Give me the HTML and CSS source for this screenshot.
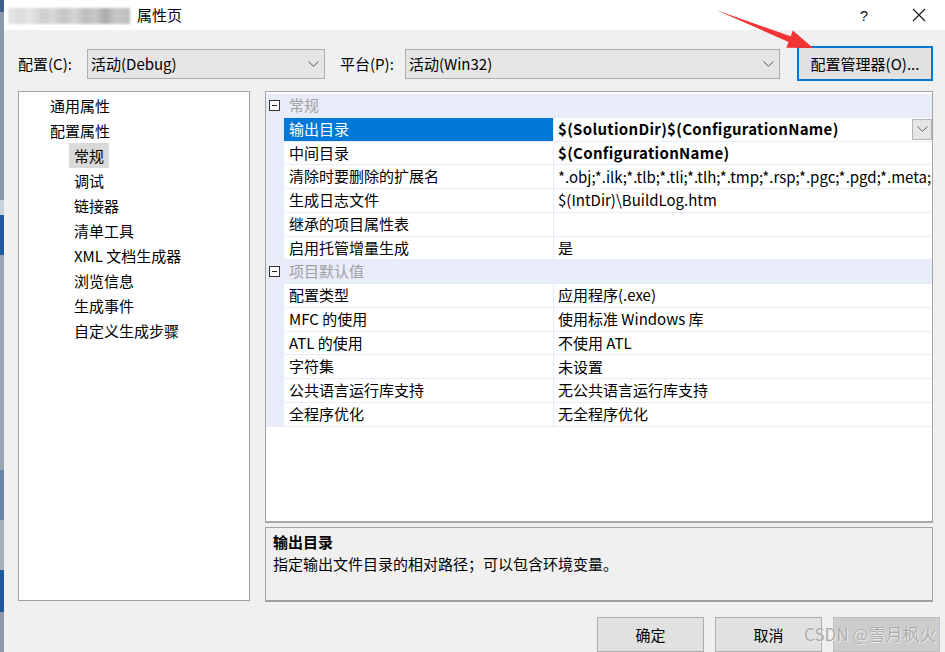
FILE: index.html
```html
<!DOCTYPE html>
<html lang="zh-CN">
<head>
<meta charset="utf-8">
<title>属性页</title>
<link rel="stylesheet" href="styles.css">
</head>
<body>
<div class="screen">
  <div class="bgstrip"></div>
  <div class="dialog">
    <div class="titlebar">
      <div class="blurname"></div>
      <span class="title">属性页</span>
      <span class="tb-help">?</span>
      <span class="tb-close"><svg width="14" height="14" viewBox="0 0 14 14"><path d="M1 1 L13 13 M13 1 L1 13" stroke="#111" stroke-width="1.1" fill="none"/></svg></span>
    </div>

    <div class="toolbar">
      <span class="lbl lbl-config">配置(C):</span>
      <div class="select sel-config"><span class="sel-text">活动(Debug)</span><svg class="chev" width="11" height="6" viewBox="0 0 11 6"><path d="M0.5 0.5 L5.5 5.3 L10.5 0.5" stroke="#555" stroke-width="1" fill="none"/></svg></div>
      <span class="lbl lbl-platform">平台(P):</span>
      <div class="select sel-platform"><span class="sel-text">活动(Win32)</span><svg class="chev" width="11" height="6" viewBox="0 0 11 6"><path d="M0.5 0.5 L5.5 5.3 L10.5 0.5" stroke="#555" stroke-width="1" fill="none"/></svg></div>
      <button class="btn btn-manager">配置管理器(O)...</button>
    </div>

    <div class="main">
      <div class="tree">
        <div class="node l1"><span>通用属性</span></div>
        <div class="node l1"><span>配置属性</span></div>
        <div class="node l2"><span class="sel">常规</span></div>
        <div class="node l2"><span>调试</span></div>
        <div class="node l2"><span>链接器</span></div>
        <div class="node l2"><span>清单工具</span></div>
        <div class="node l2"><span>XML 文档生成器</span></div>
        <div class="node l2"><span>浏览信息</span></div>
        <div class="node l2"><span>生成事件</span></div>
        <div class="node l2"><span>自定义生成步骤</span></div>
      </div>

      <div class="right">
        <div class="grid">
          <div class="row cat">
            <div class="gutter"><span class="minus"></span></div>
            <div class="cat-label">常规</div>
          </div>
          <div class="row">
            <div class="gutter"></div>
            <div class="name selected">输出目录</div>
            <div class="value bold"><span class="vtext">$(SolutionDir)$(ConfigurationName)</span><span class="dd"><svg width="11" height="6" viewBox="0 0 11 6"><path d="M0.5 0.5 L5.5 5.3 L10.5 0.5" stroke="#666" stroke-width="1" fill="none"/></svg></span></div>
          </div>
          <div class="row">
            <div class="gutter"></div>
            <div class="name">中间目录</div>
            <div class="value bold"><span class="vtext">$(ConfigurationName)</span></div>
          </div>
          <div class="row">
            <div class="gutter"></div>
            <div class="name">清除时要删除的扩展名</div>
            <div class="value"><span class="vtext">*.obj;*.ilk;*.tlb;*.tli;*.tlh;*.tmp;*.rsp;*.pgc;*.pgd;*.meta;$(TargetPath);$(ExtensionsToDeleteOnClean)</span></div>
          </div>
          <div class="row">
            <div class="gutter"></div>
            <div class="name">生成日志文件</div>
            <div class="value"><span class="vtext">$(IntDir)\BuildLog.htm</span></div>
          </div>
          <div class="row">
            <div class="gutter"></div>
            <div class="name">继承的项目属性表</div>
            <div class="value"><span class="vtext"></span></div>
          </div>
          <div class="row">
            <div class="gutter"></div>
            <div class="name">启用托管增量生成</div>
            <div class="value"><span class="vtext">是</span></div>
          </div>
          <div class="row cat">
            <div class="gutter"><span class="minus"></span></div>
            <div class="cat-label">项目默认值</div>
          </div>
          <div class="row">
            <div class="gutter"></div>
            <div class="name">配置类型</div>
            <div class="value"><span class="vtext">应用程序(.exe)</span></div>
          </div>
          <div class="row">
            <div class="gutter"></div>
            <div class="name">MFC 的使用</div>
            <div class="value"><span class="vtext">使用标准 Windows 库</span></div>
          </div>
          <div class="row">
            <div class="gutter"></div>
            <div class="name">ATL 的使用</div>
            <div class="value"><span class="vtext">不使用 ATL</span></div>
          </div>
          <div class="row">
            <div class="gutter"></div>
            <div class="name">字符集</div>
            <div class="value"><span class="vtext">未设置</span></div>
          </div>
          <div class="row">
            <div class="gutter"></div>
            <div class="name">公共语言运行库支持</div>
            <div class="value"><span class="vtext">无公共语言运行库支持</span></div>
          </div>
          <div class="row">
            <div class="gutter"></div>
            <div class="name">全程序优化</div>
            <div class="value"><span class="vtext">无全程序优化</span></div>
          </div>
        </div>
        <div class="desc">
          <div class="desc-title">输出目录</div>
          <div class="desc-text">指定输出文件目录的相对路径；可以包含环境变量。</div>
        </div>
      </div>
    </div>

    <div class="footer">
      <button class="btn btn-foot">确定</button>
      <button class="btn btn-foot">取消</button>
      <button class="btn btn-foot disabled" aria-label="应用"></button>
    </div>
  </div>

  <svg class="arrow" width="945" height="652" viewBox="0 0 945 652">
    <polygon points="716,10 790.7,36.3 792.9,30.5 813,48 786.3,47.7 788.5,41.9" fill="#f23434"/>
  </svg>
  <div class="watermark">CSDN @雪月枫火</div>
</div>
</body>
</html>
```

FILE: styles.css
```css
* { box-sizing: border-box; }

html, body {
  margin: 0;
  padding: 0;
  width: 945px;
  height: 652px;
  overflow: hidden;
  background: #f0f0f0;
}

body {
  font-family: "Noto Sans CJK SC", "Noto Sans", sans-serif;
  font-size: 15px;
  color: #000;
}

.screen {
  position: relative;
  display: flex;
  width: 945px;
  height: 652px;
}

.bgstrip {
  width: 4px;
  flex: none;
  background: linear-gradient(180deg,
    #3d5f8a 0, #3d5f8a 12px,
    #8a98a8 12px, #8a98a8 200px,
    #c9d3de 200px, #c9d3de 215px,
    #1d5a9e 215px, #1d5a9e 255px,
    #9aa6b3 255px, #9aa6b3 470px,
    #6a86a6 470px, #6a86a6 520px,
    #a6b0ba 520px, #a6b0ba 570px,
    #1c5aa0 570px, #1c5aa0 612px,
    #8e9aa7 612px);
}

.dialog {
  flex: 1;
  display: flex;
  flex-direction: column;
  background: #f0f0f0;
}

/* Title bar */
.titlebar {
  height: 30px;
  flex: none;
  background: #fff;
  display: flex;
  align-items: center;
}

.blurname {
  width: 122px;
  height: 16px;
  margin-left: 4px;
  margin-top: 1px;
  background: linear-gradient(90deg,
    #e8e8e8 0, #dcdcdc 10%, #e4e4e4 18%, #cfcfcf 28%, #d9d9d9 36%,
    #c6c6c6 46%, #d6d6d6 54%, #bdbdbd 64%, #c9c9c9 72%, #a9a9a9 80%,
    #c8c8c8 88%, #bebebe 100%);
  filter: blur(1.2px);
}

.title {
  margin-left: 7px;
  font-size: 15px;
  line-height: 30px;
}

.tb-help {
  margin-left: auto;
  margin-right: 44px;
  font-family: "Liberation Sans", sans-serif;
  font-size: 15px;
  color: #111;
}

.tb-close {
  display: flex;
  margin-right: 19px;
}

/* Toolbar */
.toolbar {
  display: flex;
  align-items: center;
  height: 35px;
  margin-top: 16px;
  padding-left: 14px;
  flex: none;
}

.lbl {
  flex: none;
  line-height: 30px;
}

.lbl-config { width: 69px; }
.lbl-platform { width: 65px; margin-left: 15px; }

.select {
  height: 30px;
  display: flex;
  align-items: center;
  background: #e5e5e5;
  border: 1px solid #acacac;
  padding-left: 3px;
  padding-right: 5px;
  flex: none;
}

.sel-config { width: 238px; }
.sel-platform { width: 375px; }

.sel-text { flex: 1; line-height: 28px; }
.chev { flex: none; }

.btn {
  font-family: "Noto Sans CJK SC", "Noto Sans", sans-serif;
  font-size: 15px;
  color: #000;
  background: #e1e1e1;
  border: 1px solid #adadad;
  padding: 0;
  margin: 0;
}

.btn-manager {
  margin-left: 17px;
  width: 136px;
  height: 35px;
  border: 2px solid #0078d7;
}

/* Main */
.main {
  display: flex;
  gap: 15px;
  margin-top: 10px;
  padding-left: 14px;
  height: 511px;
  flex: none;
}

.tree {
  width: 232px;
  height: 510px;
  background: #fff;
  border: 1px solid #9ea1a7;
  padding-top: 1px;
}

.node {
  height: 25px;
  line-height: 25px;
  white-space: nowrap;
}

.node.l1 { padding-left: 31px; }
.node.l2 { padding-left: 50px; }
.node.l2 span { display: inline-block; padding: 0 5px; }
.node .sel { background: #d9d9d9; }

.right {
  width: 668px;
  display: flex;
  flex-direction: column;
  gap: 4px;
}

.grid {
  height: 432px;
  background: #fff;
  border: 1px solid #a3a3a3;
  border-bottom: 2px solid #a8a8a8;
  padding-top: 2px;
  overflow: hidden;
}

.row {
  display: grid;
  grid-template-columns: 18px 269px 1fr;
  height: 23.75px;
  border-bottom: 1px solid #e8ebf8;
}

.gutter {
  background: #e8ebf8;
  display: flex;
  align-items: center;
}

.minus {
  width: 11px;
  height: 11px;
  margin-left: 3px;
  border: 1px solid #333;
  position: relative;
  background: #fff;
}

.minus::after {
  content: "";
  position: absolute;
  left: 2px;
  right: 2px;
  top: 4px;
  height: 1px;
  background: #222;
}

.cat { background: #e8ebf8; }

.cat-label {
  grid-column: 2 / 4;
  color: #a0a0a0;
  padding-left: 5px;
  line-height: 22px;
}

.name {
  padding-left: 5px;
  line-height: 22px;
  white-space: nowrap;
  overflow: hidden;
}

.name.selected {
  background: #0078d7;
  color: #fff;
}

.value {
  border-left: 1px solid #e8ebf8;
  padding-left: 4px;
  display: flex;
  align-items: center;
  overflow: hidden;
  min-width: 0;
}

.vtext {
  flex: 1;
  white-space: nowrap;
  overflow: hidden;
  line-height: 22px;
}

.value.bold .vtext { font-weight: 700; letter-spacing: 0.3px; }

.dd {
  flex: none;
  width: 20px;
  height: 21px;
  background: #e5e5e5;
  border: 1px solid #b5b5b5;
  display: flex;
  align-items: center;
  justify-content: center;
}

.desc {
  height: 75px;
  background: #f0f0f0;
  border: 1px solid #a3a3a3;
  border-bottom: 2px solid #a0a0a0;
  padding: 3px 7px;
}

.desc-title {
  font-weight: 700;
  line-height: 22px;
}

.desc-text { line-height: 22px; }

/* Footer */
.footer {
  display: flex;
  justify-content: flex-end;
  gap: 11px;
  margin-top: 15px;
  padding-right: 5px;
  flex: none;
}

.btn-foot {
  width: 107px;
  height: 35px;
}

.btn-foot.disabled {
  background: #cccccc;
  border-color: #bfbfbf;
  color: #8a8a8a;
}

/* Overlays */
.arrow {
  position: absolute;
  left: 0;
  top: 0;
  pointer-events: none;
}

.watermark {
  position: absolute;
  left: 804px;
  top: 621px;
  font-size: 17px;
  line-height: 26px;
  color: #a9a9a9;
  text-shadow: 0 0 1px #fff, 1px 1px 0 #e8e8e8;
  white-space: nowrap;
  pointer-events: none;
}
```
